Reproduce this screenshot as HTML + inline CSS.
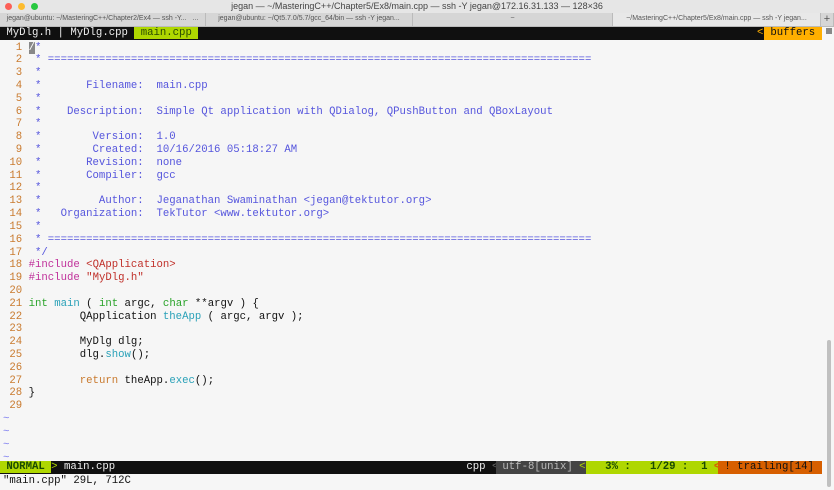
<!DOCTYPE html>
<html><head><meta charset="utf-8"><style>
*{margin:0;padding:0;box-sizing:border-box}
body{width:834px;height:490px;overflow:hidden;background:#f6f6f6;font-family:"Liberation Mono",monospace;position:relative}
#title{position:absolute;left:0;top:0;width:834px;height:13px;background:#e6e6e6;font:9px "Liberation Sans",sans-serif;color:#444;text-align:center;line-height:12px}
.dot{position:absolute;top:3px;width:7px;height:7px;border-radius:50%}
#tabs{position:absolute;left:0;top:13px;width:834px;height:14px;background:#d6d6d6;border-bottom:1px solid #bbb;font:7px "Liberation Sans",sans-serif;color:#555}
.tab{position:absolute;top:0;height:13px;line-height:12px;text-align:center;border-right:1px solid #bbb;white-space:nowrap;overflow:hidden}
#tl{position:absolute;left:0;top:27px;width:822px;height:13px;background:#101010;font-size:10.67px;line-height:13px;color:#eee;white-space:pre}
pre{position:absolute;left:3px;top:41.5px;font-family:"Liberation Mono",monospace;font-size:10.67px;line-height:12.81px;color:#111}
.n{color:#c97a2e}.c{color:#5555dd}.p{color:#c0309a}.s{color:#c0302a}.t{color:#29a329}.f{color:#2aa1b8}.k{color:#c97a2e}.tl{color:#7d7df0}
#sb{position:absolute;left:0;top:461px;width:822px;height:13px;background:#101010;font-size:10.67px;line-height:13px;white-space:pre;color:#eee}
#cmd{position:absolute;left:3px;top:475px;font-size:10.67px;line-height:12px;white-space:pre;color:#111}
</style></head><body>
<div id="title"><span class="dot" style="left:5px;background:#fc5f57"></span><span class="dot" style="left:18px;background:#fdbc2e"></span><span class="dot" style="left:31px;background:#28c840"></span>jegan — ~/MasteringC++/Chapter5/Ex8/main.cpp — ssh -Y jegan@172.16.31.133 — 128×36</div>
<div id="tabs">
<div class="tab" style="left:0;width:206px">jegan@ubuntu: ~/MasteringC++/Chapter2/Ex4 — ssh -Y...&nbsp;&nbsp;&nbsp;...</div>
<div class="tab" style="left:206px;width:207px">jegan@ubuntu: ~/Qt5.7.0/5.7/gcc_64/bin — ssh -Y jegan...</div>
<div class="tab" style="left:413px;width:200px">~</div>
<div class="tab" style="left:613px;width:208px;background:#e8e8e8">~/MasteringC++/Chapter5/Ex8/main.cpp — ssh -Y jegan...</div>
<div class="tab" style="left:821px;width:13px;font-size:11px">+</div>
</div>
<div id="tl"> MyDlg.h | MyDlg.cpp <span style="background:#afd700;color:#2a4a00"> main.cpp </span><span style="position:absolute;left:757px;top:0;color:#ffaf00">&lt;</span><span style="position:absolute;left:764px;top:0;width:58px;background:#ffaf00;color:#111"> buffers</span></div>
<div style="position:absolute;left:826px;top:28px;width:6px;height:6px;background:#888"></div>
<div style="position:absolute;left:827px;top:340px;width:4px;height:147px;background:#c0c0c0;border-radius:2px"></div>
<pre><span class="n">  1 </span><span style="background:#888;color:#fff">/</span><span class="c">*</span>
<span class="n">  2 </span><span class="c"> * =====================================================================================</span>
<span class="n">  3 </span><span class="c"> *</span>
<span class="n">  4 </span><span class="c"> *       Filename:  main.cpp</span>
<span class="n">  5 </span><span class="c"> *</span>
<span class="n">  6 </span><span class="c"> *    Description:  Simple Qt application with QDialog, QPushButton and QBoxLayout</span>
<span class="n">  7 </span><span class="c"> *</span>
<span class="n">  8 </span><span class="c"> *        Version:  1.0</span>
<span class="n">  9 </span><span class="c"> *        Created:  10/16/2016 05:18:27 AM</span>
<span class="n"> 10 </span><span class="c"> *       Revision:  none</span>
<span class="n"> 11 </span><span class="c"> *       Compiler:  gcc</span>
<span class="n"> 12 </span><span class="c"> *</span>
<span class="n"> 13 </span><span class="c"> *         Author:  Jeganathan Swaminathan &lt;jegan@tektutor.org&gt;</span>
<span class="n"> 14 </span><span class="c"> *   Organization:  TekTutor &lt;www.tektutor.org&gt;</span>
<span class="n"> 15 </span><span class="c"> *</span>
<span class="n"> 16 </span><span class="c"> * =====================================================================================</span>
<span class="n"> 17 </span><span class="c"> */</span>
<span class="n"> 18 </span><span class="p">#include</span> <span class="s">&lt;QApplication&gt;</span>
<span class="n"> 19 </span><span class="p">#include</span> <span class="s">"MyDlg.h"</span>
<span class="n"> 20 </span>
<span class="n"> 21 </span><span class="t">int</span> <span class="f">main</span> ( <span class="t">int</span> argc, <span class="t">char</span> **argv ) {
<span class="n"> 22 </span>        QApplication <span class="f">theApp</span> ( argc, argv );
<span class="n"> 23 </span>
<span class="n"> 24 </span>        MyDlg dlg;
<span class="n"> 25 </span>        dlg.<span class="f">show</span>();
<span class="n"> 26 </span>
<span class="n"> 27 </span>        <span class="k">return</span> theApp.<span class="f">exec</span>();
<span class="n"> 28 </span>}
<span class="n"> 29 </span>
<span class="tl">~</span>
<span class="tl">~</span>
<span class="tl">~</span>
<span class="tl">~</span></pre>
<div id="sb"><span style="background:#afd700;color:#1a4a00;font-weight:bold"> NORMAL </span><span style="color:#afd700">&gt;</span> main.cpp<span style="position:absolute;left:460px;top:0"> cpp <span style="color:#666">&lt;</span></span><span style="position:absolute;left:496px;top:0;width:90px;background:#444;color:#bbb"> utf-8[unix] <span style="color:#afd700">&lt;</span></span><span style="position:absolute;left:586px;top:0;width:132px;background:#afd700;color:#1a4a00;font-weight:bold">   3% :   1/29 :  1 <span style="color:#d75f00">&lt;</span></span><span style="position:absolute;left:718px;top:0;width:104px;background:#d75f00;color:#111"> ! trailing[14]</span></div>
<div id="cmd">"main.cpp" 29L, 712C</div>
</body></html>
